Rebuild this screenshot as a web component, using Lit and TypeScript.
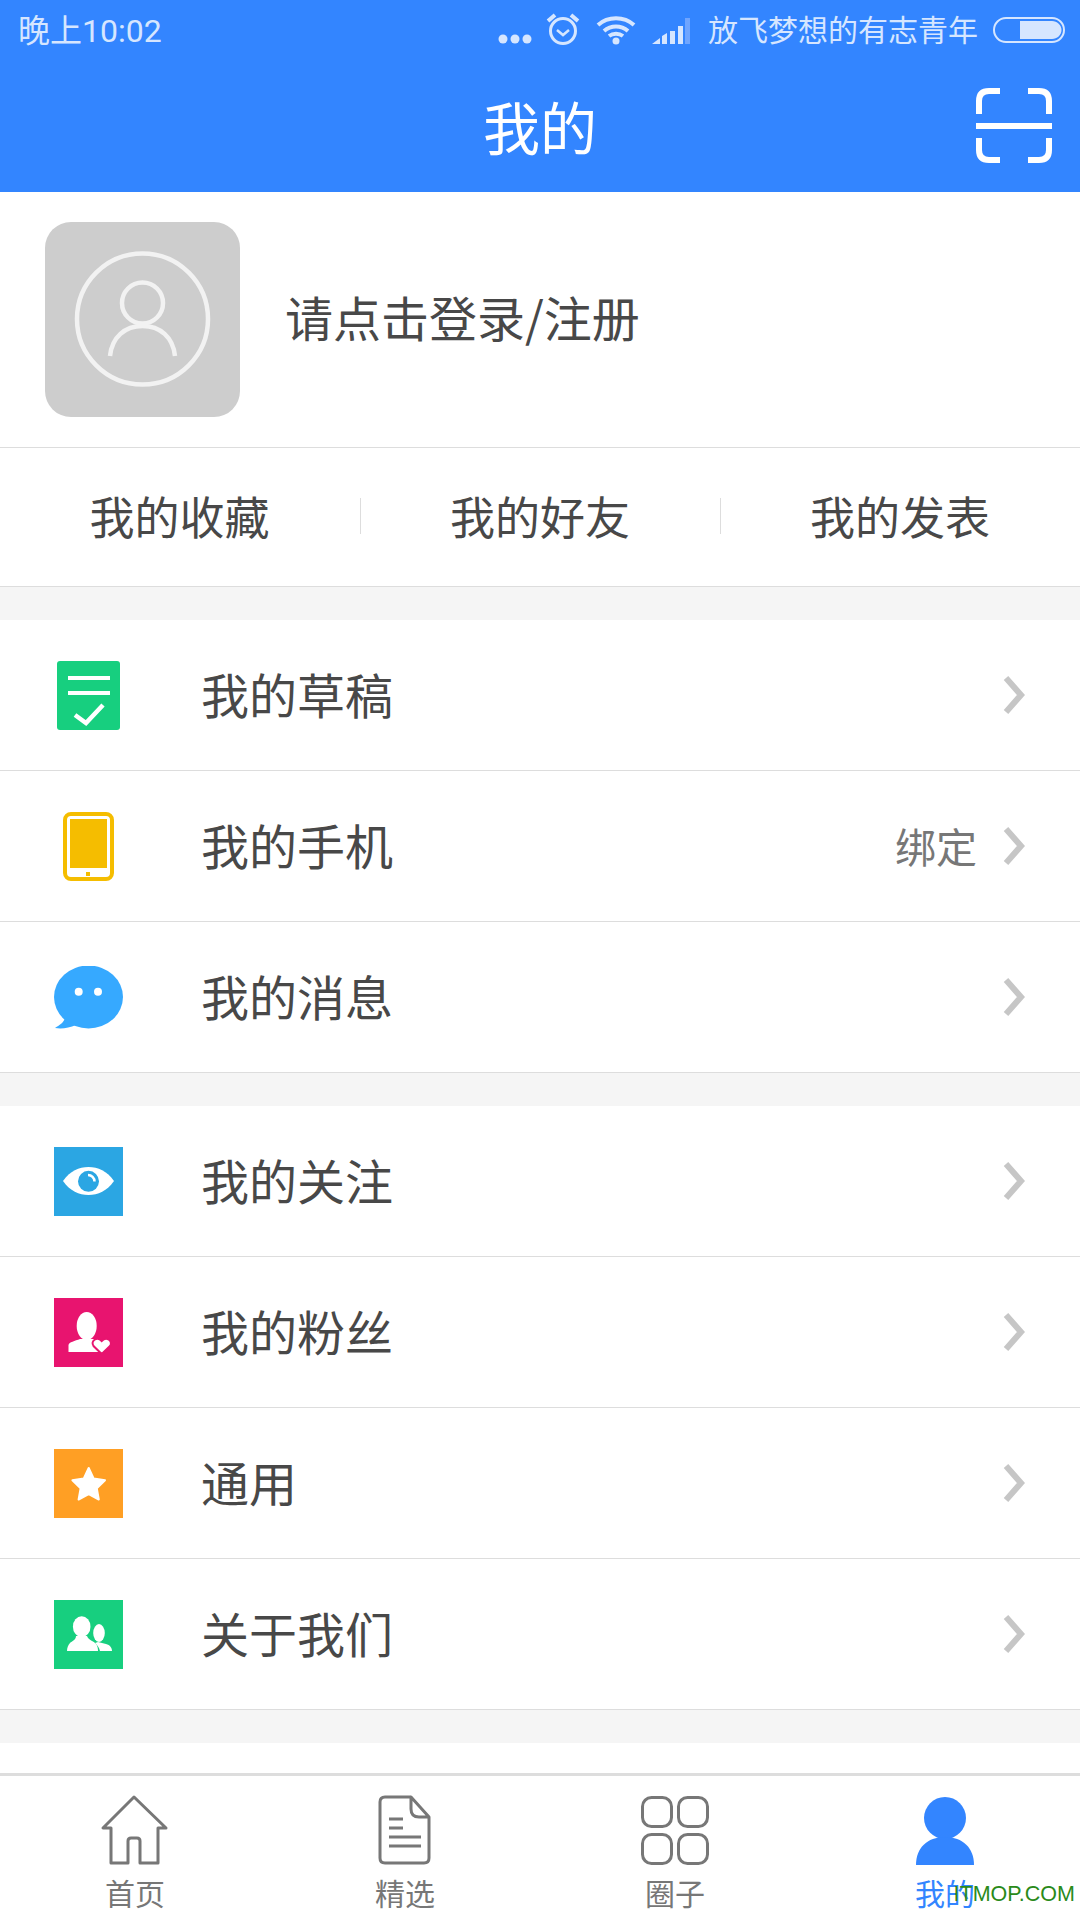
import { LitElement, html, css, type TemplateResult } from "lit";
import { customElement, property } from "lit/decorators.js";

const chevron = html`<svg class="chevron" width="25" height="42" viewBox="0 0 25 42">
  <path d="M5 4L20 21L5 38" fill="none" stroke="#c6c6c6" stroke-width="6" />
</svg>`;

@customElement("menu-row")
export class MenuRow extends LitElement {
  static override styles = css`
    :host {
      display: block;
      background: #fff;
      border-bottom: 1px solid #ddd;
    }
    .row {
      height: 150px;
      display: flex;
      align-items: center;
      padding: 0 54px;
    }
    .icon {
      width: 69px;
      height: 69px;
      display: flex;
      align-items: center;
      justify-content: center;
      margin-right: 78px;
    }
    .label {
      flex: 1;
      font-size: 48px;
      color: #484848;
      padding-bottom: 4px;
    }
    .extra {
      font-size: 41px;
      color: #777;
      margin-right: 24px;
      padding-bottom: 2px;
    }
    svg {
      display: block;
    }
  `;

  @property()
  label = "";

  @property()
  extra = "";

  override render() {
    return html`<div class="row">
      <div class="icon"><slot></slot></div>
      <div class="label">${this.label}</div>
      ${this.extra ? html`<div class="extra">${this.extra}</div>` : ""}
      ${chevron}
    </div>`;
  }
}

const icons: Record<string, TemplateResult> = {
  draft: html`<svg width="63" height="69" viewBox="0 0 63 69">
    <rect width="63" height="69" rx="3" fill="#17cf7f" />
    <path d="M11 17H53M11 32H53" stroke="#fff" stroke-width="4" />
    <path d="M18 54L29 62L46 44" fill="none" stroke="#fff" stroke-width="4.5" />
  </svg>`,
  phone: html`<svg width="51" height="69" viewBox="0 0 51 69">
    <rect x="2" y="2" width="47" height="65" rx="6" fill="#fff" stroke="#f5bd00" stroke-width="4" />
    <rect x="7" y="7" width="37" height="49" fill="#f5bd00" />
    <rect x="23" y="60" width="4" height="4" fill="#f5bd00" />
  </svg>`,
  message: html`<svg width="69" height="63" viewBox="0 0 69 63">
    <ellipse cx="34.5" cy="31" rx="34.5" ry="31.5" fill="#36a9ff" />
    <path d="M11 52C10 56 6 59 1 62C8 63 15 62 22 59Z" fill="#36a9ff" />
    <circle cx="24.7" cy="25.7" r="4" fill="#fff" />
    <circle cx="44" cy="25.7" r="4" fill="#fff" />
  </svg>`,
  follow: html`<svg width="69" height="69" viewBox="0 0 69 69">
    <rect width="69" height="69" fill="#2ba6e3" />
    <path d="M9 34C16 24 25 20 34.5 20C44 20 53 24 60 34C53 44 44 48 34.5 48C25 48 16 44 9 34Z" fill="#fff" />
    <circle cx="34.5" cy="34.3" r="10.5" fill="#2ba6e3" />
    <path d="M34 28A6.5 6.5 0 0 1 40.5 34.5" fill="none" stroke="#fff" stroke-width="2.5" />
  </svg>`,
  fans: html`<svg width="69" height="69" viewBox="0 0 69 69">
    <rect width="69" height="69" fill="#e8146f" />
    <ellipse cx="32.7" cy="28" rx="10" ry="14" fill="#fff" />
    <path d="M14.5 54V47C15 44 21 43 26 41H40C44 43 48 44 50 47V54Z" fill="#fff" />
    <path d="M47.7 56L39.5 48C36 43 43 38 47.7 43C52.4 38 59.5 43 56 48Z" fill="#fff" stroke="#e8146f" stroke-width="2" />
  </svg>`,
  general: html`<svg width="69" height="69" viewBox="0 0 69 69">
    <rect width="69" height="69" fill="#ff9f24" />
    <path d="M34.7 19L39.7 29.6L51 31.2L42.8 39.4L44.8 50.5L34.7 45.2L24.6 50.5L26.6 39.4L18.4 31.2L29.7 29.6Z" fill="#fff" stroke="#fff" stroke-width="2" stroke-linejoin="round" />
  </svg>`,
  about: html`<svg width="69" height="69" viewBox="0 0 69 69">
    <rect width="69" height="69" fill="#17cf7f" />
    <ellipse cx="45" cy="33" rx="5.8" ry="9" fill="#fff" />
    <path d="M44 42L52 44C56 45 58 48 58 51H46C45 47 43 45 41 43Z" fill="#fff" />
    <ellipse cx="27.7" cy="26.7" rx="8.8" ry="10.5" fill="#fff" />
    <path d="M22 36H33C34 40 40 41 42 44C43.5 46 44 48 44 51H13C13 48 14 45 16 43C18 41 22 40 22 36Z" fill="#fff" />
  </svg>`,
};

@customElement("app-root")
export class AppRoot extends LitElement {
  static override styles = css`
    :host {
      display: block;
      position: relative;
      width: 1080px;
      height: 1920px;
      overflow: hidden;
      background: #fff;
      font-family: "Noto Sans CJK SC", "Noto Sans", sans-serif;
    }
    svg {
      display: block;
    }
    .top {
      height: 192px;
      background: #3385ff;
    }
    .status {
      height: 60px;
      display: flex;
      align-items: center;
      padding: 0 15px 0 18px;
      color: #d6e6ff;
    }
    .time {
      flex: 1;
      padding-top: 3px;
      font-family: Roboto, "Noto Sans CJK SC", sans-serif;
      font-size: 32px;
      line-height: 57px;
    }
    .status-icons {
      display: flex;
      align-items: center;
    }
    .dots {
      margin-top: 17px;
      margin-right: 1px;
    }
    .alarm {
      margin-left: 13px;
      margin-top: -2px;
    }
    .wifi {
      margin-left: 16px;
      margin-top: -1px;
    }
    .signal {
      margin-left: 16px;
      margin-top: 1px;
    }
    .carrier {
      font-size: 30px;
      line-height: 56px;
      padding-bottom: 4px;
      margin: 0 15px 0 18px;
    }
    .nav {
      height: 132px;
      display: flex;
      align-items: center;
      justify-content: center;
      position: relative;
    }
    .nav-title {
      color: #fff;
      font-size: 57px;
      line-height: 130px;
      padding-bottom: 2px;
    }
    .scan {
      position: absolute;
      right: 26px;
      top: 26px;
    }
    .profile {
      height: 255px;
      display: flex;
      align-items: center;
      gap: 45px;
      padding-left: 45px;
      border-bottom: 1px solid #ddd;
    }
    .avatar {
      width: 195px;
      height: 195px;
      border-radius: 26px;
      background: #cdcdcd;
    }
    .login {
      font-size: 48px;
      color: #484848;
      padding-bottom: 8px;
    }
    .quick {
      height: 138px;
      display: grid;
      grid-template-columns: repeat(3, 1fr);
      align-items: center;
      border-bottom: 1px solid #ddd;
    }
    .quick-item {
      text-align: center;
      font-size: 45px;
      color: #484848;
      border-left: 1px solid #ddd;
      line-height: 36px;
      height: 36px;
      margin-top: -3px;
      text-indent: -1px;
    }
    .quick-item:first-child {
      border-left: none;
    }
    .gap {
      height: 33px;
      background: #f5f5f5;
    }
    .tail {
      height: 30px;
    }
    .tabbar {
      border-top: 3px solid #ddd;
      height: 144px;
      display: grid;
      grid-template-columns: repeat(4, 1fr);
    }
    .tab {
      display: flex;
      flex-direction: column;
      align-items: center;
      padding-top: 18px;
      font-size: 30px;
      line-height: 38px;
      color: #777;
    }
    .tab svg {
      height: 72px;
      margin-bottom: 7px;
    }
    .tab.active {
      color: #3385ff;
    }
    .watermark {
      position: absolute;
      right: 5px;
      bottom: 12px;
      font-family: "Liberation Sans", sans-serif;
      font-size: 21.5px;
      line-height: 28px;
      color: #2a8a1a;
    }
  `;

  override render() {
    return html`
      <div class="top">
        <div class="status">
          <div class="time">晚上10:02</div>
          <div class="status-icons">
            <svg class="dots" width="34" height="12" viewBox="0 0 34 12">
              <circle cx="5" cy="6" r="4.5" fill="#d6e6ff" />
              <circle cx="17" cy="6" r="4.5" fill="#d6e6ff" />
              <circle cx="29" cy="6" r="4.5" fill="#d6e6ff" />
            </svg>
            <svg class="alarm" width="34" height="34" viewBox="0 0 34 34">
              <circle cx="17" cy="19" r="12.5" fill="none" stroke="#d6e6ff" stroke-width="3" />
              <path d="M11 18L17 23L23 18" fill="none" stroke="#d6e6ff" stroke-width="2.5" />
              <path d="M2 9L9 3M32 9L25 3" stroke="#d6e6ff" stroke-width="4" />
            </svg>
            <svg class="wifi" width="40" height="30" viewBox="0 0 40 30">
              <path d="M2 10C12 1 28 1 38 10M8 16C15 10 25 10 32 16M13 21C17 18 23 18 27 21" fill="none" stroke="#d6e6ff" stroke-width="4" />
              <circle cx="20" cy="26" r="3.5" fill="#d6e6ff" />
            </svg>
            <svg class="signal" width="38" height="26" viewBox="0 0 38 26">
              <path d="M0 26L8 20V26ZM10 18L15 15V26H10ZM18 13H23V26H18ZM26 8H31V26H26Z" fill="#d6e6ff" />
              <rect x="33" y="0" width="5" height="26" fill="#6fa5ff" />
            </svg>
            <span class="carrier">放飞梦想的有志青年</span>
            <svg width="72" height="26" viewBox="0 0 72 26">
              <rect x="1" y="1" width="70" height="24" rx="12" fill="none" stroke="#d6e6ff" stroke-width="2" />
              <path d="M27 4H59C64 4 68.5 8 68.5 13C68.5 18 64 22 59 22H27Z" fill="#d6e6ff" />
            </svg>
          </div>
        </div>
        <div class="nav">
          <div class="nav-title">我的</div>
          <svg class="scan" width="80" height="80" viewBox="0 0 80 80">
            <path d="M5 28V15Q5 5 15 5H26M54 5H65Q75 5 75 15V28M5 52V64Q5 74 15 74H26M54 74H65Q75 74 75 64V52" fill="none" stroke="#fff" stroke-width="6" />
            <path d="M2 40H78" stroke="#fff" stroke-width="6" />
          </svg>
        </div>
      </div>

      <div class="profile">
        <div class="avatar">
          <svg width="195" height="195" viewBox="0 0 195 195">
            <g fill="none" stroke="#f2f2f2" stroke-width="4.5">
              <circle cx="97.5" cy="97" r="65.5" />
              <circle cx="97.5" cy="81" r="20.5" />
              <path d="M65 134C67 115 80 104 97.5 104C115 104 128 115 130 134" />
            </g>
          </svg>
        </div>
        <div class="login">请点击登录/注册</div>
      </div>

      <div class="quick">
        <div class="quick-item">我的收藏</div>
        <div class="quick-item">我的好友</div>
        <div class="quick-item">我的发表</div>
      </div>

      <div class="gap"></div>
      <menu-row label="我的草稿">${icons.draft}</menu-row>
      <menu-row label="我的手机" extra="绑定">${icons.phone}</menu-row>
      <menu-row label="我的消息">${icons.message}</menu-row>

      <div class="gap"></div>
      <menu-row label="我的关注">${icons.follow}</menu-row>
      <menu-row label="我的粉丝">${icons.fans}</menu-row>
      <menu-row label="通用">${icons.general}</menu-row>
      <menu-row label="关于我们">${icons.about}</menu-row>

      <div class="gap"></div>
      <div class="tail"></div>

      <div class="tabbar">
        <div class="tab">
          <svg width="70" height="72" viewBox="0 0 70 72">
            <path d="M34 3L3 34H11V69H28V47Q28 44 31 44H37Q40 44 40 47V69H58V34H66Z" fill="none" stroke="#777" stroke-width="3" stroke-linejoin="round" />
          </svg>
          首页
        </div>
        <div class="tab">
          <svg width="56" height="72" viewBox="0 0 56 72">
            <path d="M34 3H8Q3 3 3 8V64Q3 69 8 69H47Q52 69 52 64V23L34 3V15Q34 23 42 23H52" fill="none" stroke="#777" stroke-width="3" stroke-linejoin="round" />
            <path d="M12 25H26M12 34H26M12 43H44M12 52H44" stroke="#777" stroke-width="3" />
          </svg>
          精选
        </div>
        <div class="tab">
          <svg width="72" height="72" viewBox="0 0 72 72">
            <g fill="none" stroke="#777" stroke-width="3">
              <rect x="3.5" y="3.5" width="29" height="29" rx="9" />
              <rect x="39.5" y="3.5" width="29" height="29" rx="9" />
              <rect x="3.5" y="40.5" width="29" height="29" rx="9" />
              <rect x="39.5" y="40.5" width="29" height="29" rx="9" />
            </g>
          </svg>
          圈子
        </div>
        <div class="tab active">
          <svg width="60" height="72" viewBox="0 0 60 72">
            <circle cx="30" cy="24" r="21" fill="#3385ff" />
            <path d="M1 71C1 54 12 43 30 43C48 43 59 54 59 71Z" fill="#3385ff" />
          </svg>
          我的
        </div>
      </div>
      <div class="watermark">ITMOP.COM</div>
    `;
  }
}

declare global {
  interface HTMLElementTagNameMap {
    "app-root": AppRoot;
    "menu-row": MenuRow;
  }
}
